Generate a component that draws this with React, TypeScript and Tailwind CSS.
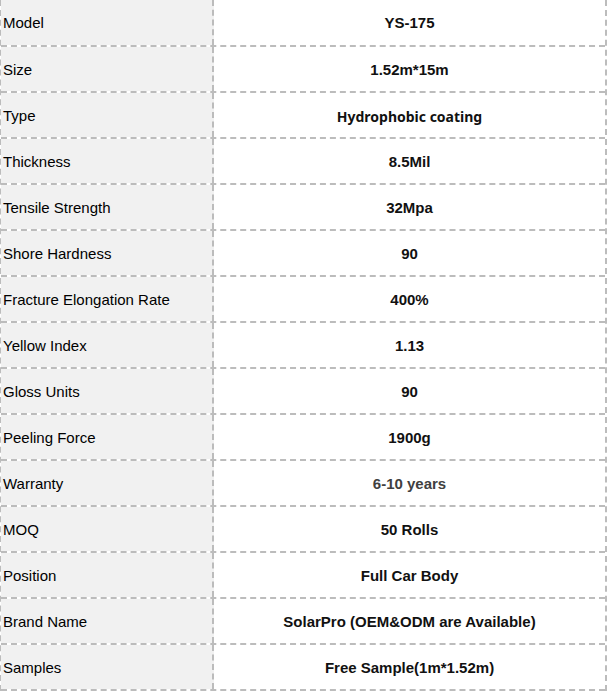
const rows: { label: string; value: string; tone?: "alt" | "muted" }[] = [
  { label: "Model", value: "YS-175" },
  { label: "Size", value: "1.52m*15m" },
  { label: "Type", value: "Hydrophobic coating", tone: "alt" },
  { label: "Thickness", value: "8.5Mil" },
  { label: "Tensile Strength", value: "32Mpa" },
  { label: "Shore Hardness", value: "90" },
  { label: "Fracture Elongation Rate", value: "400%" },
  { label: "Yellow Index", value: "1.13" },
  { label: "Gloss Units", value: "90" },
  { label: "Peeling Force", value: "1900g" },
  { label: "Warranty", value: "6-10 years", tone: "muted" },
  { label: "MOQ", value: "50 Rolls" },
  { label: "Position", value: "Full Car Body" },
  { label: "Brand Name", value: "SolarPro (OEM&ODM are Available)" },
  { label: "Samples", value: "Free Sample(1m*1.52m)" },
];

export default function App() {
  return (
    <div className="w-[607px] h-[691px] overflow-hidden bg-white font-['Liberation_Sans',Arial,sans-serif] text-[15px]">
      <div className="ml-[-1px] w-[608px] border-l-2 border-r-2 border-dashed border-[#bcbcbc]">
        {rows.map((row, i) => (
          <div
            key={row.label}
            className={
              "flex border-b-2 border-dashed border-[#bcbcbc] " +
              (i === 0 ? "h-[47px]" : "h-[46px]")
            }
          >
            <div className="w-[213px] shrink-0 flex items-center pl-[2px] pt-[2px] bg-[#f1f1f1] text-black border-r-2 border-dashed border-[#bcbcbc]">
              {row.label}
            </div>
            <div
              className={
                "flex-1 flex items-center justify-center pt-[2px] font-bold " +
                (row.tone === "alt"
                  ? "font-['Noto_Sans',sans-serif] text-[14px] text-[#111]"
                  : row.tone === "muted"
                  ? "text-[#404040]"
                  : "text-[#111]")
              }
            >
              {row.value}
            </div>
          </div>
        ))}
      </div>
    </div>
  );
}
